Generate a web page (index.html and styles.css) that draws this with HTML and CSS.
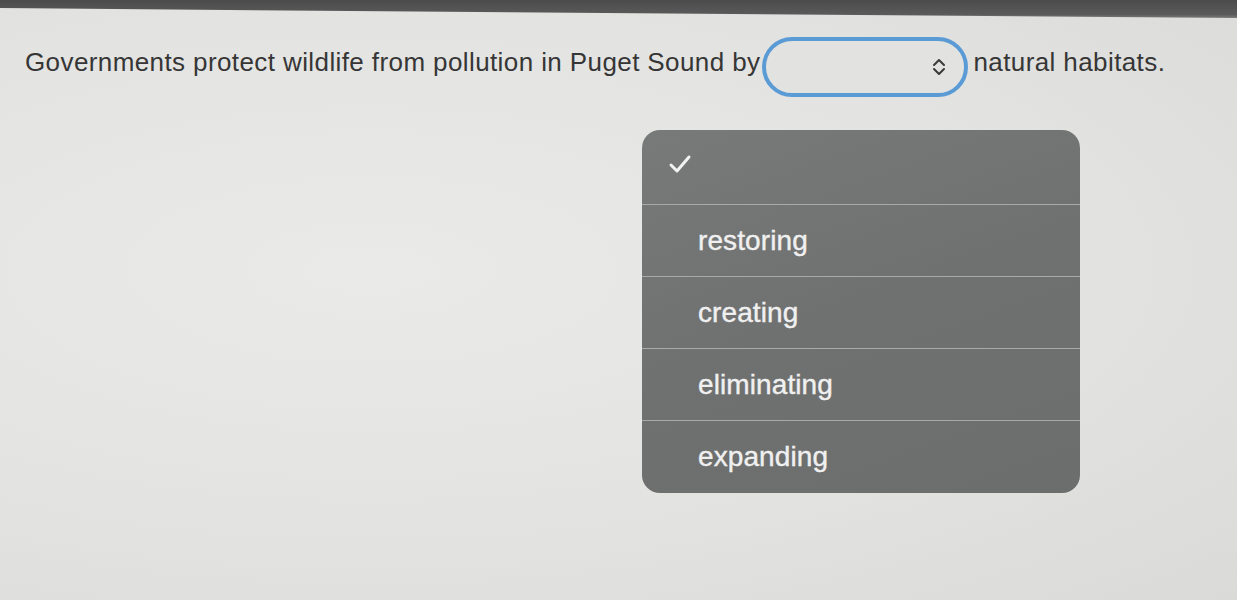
FILE: index.html
```html
<!DOCTYPE html>
<html lang="en">
<head>
<meta charset="utf-8">
<title>Puget Sound question</title>
<link rel="stylesheet" href="styles.css">
</head>
<body>
<div class="topbar"></div>
<main class="page">
  <div class="sentence">
    <span class="text">Governments protect wildlife from pollution in Puget Sound by</span>
    <span class="select">
      <svg class="chev" width="16" height="20" viewBox="0 0 16 20" aria-hidden="true">
        <path d="M3 8 L8 3 L13 8" fill="none" stroke="#3a3a3a" stroke-width="2" stroke-linecap="round" stroke-linejoin="round"/>
        <path d="M3 12 L8 17 L13 12" fill="none" stroke="#3a3a3a" stroke-width="2" stroke-linecap="round" stroke-linejoin="round"/>
      </svg>
    </span>
    <span class="text">natural habitats.</span>
  </div>
  <div class="menu">
    <div class="item check">
      <svg width="24" height="20" viewBox="0 0 24 20" aria-hidden="true">
        <path d="M3 11 L9 17 L21 3" fill="none" stroke="#f2f2f2" stroke-width="3" stroke-linecap="round" stroke-linejoin="round"/>
      </svg>
    </div>
    <div class="item">restoring</div>
    <div class="item">creating</div>
    <div class="item">eliminating</div>
    <div class="item last">expanding</div>
  </div>
</main>
</body>
</html>
```

FILE: styles.css
```css
html, body {
  margin: 0;
  padding: 0;
}
body {
  width: 1237px;
  height: 600px;
  overflow: hidden;
  background: radial-gradient(ellipse at 30% 45%, #eaeae8 0%, #e3e3e1 55%, #dadad8 100%);
  font-family: "Liberation Sans", Arial, sans-serif;
  color: #363636;
}
.topbar {
  height: 18px;
  margin-bottom: -3px;
  background: linear-gradient(180deg, #4b4b4b 0%, #5a5a5a 80%, #7a7a7a 100%);
  clip-path: polygon(0 0, 100% 0, 100% 100%, 0 45%);
}
.page {
  position: relative;
  padding: 22px 0 0 25px;
}
.sentence {
  display: flex;
  align-items: flex-start;
  font-size: 26px;
  letter-spacing: 0.4px;
}
.text {
  padding-top: 10px;
  line-height: 30px;
}
.select {
  box-sizing: border-box;
  width: 206px;
  height: 60px;
  margin: 0 5px 0 2px;
  border: 4px solid #5a9bd6;
  border-radius: 30px;
  background: #e2e2e0;
  display: flex;
  align-items: center;
  justify-content: flex-end;
  padding-right: 17px;
}
.chev {
  display: block;
}
.menu {
  position: absolute;
  left: 642px;
  top: 115px;
  width: 438px;
  background: linear-gradient(160deg, #787979 0%, #6f7070 50%, #6c6d6d 100%);
  border-radius: 18px;
  overflow: hidden;
}
.item {
  box-sizing: border-box;
  height: 72px;
  display: flex;
  align-items: center;
  padding-left: 56px;
  font-size: 28px;
  letter-spacing: 0.1px;
  color: #f0f0f0;
  -webkit-text-stroke: 0.4px #f0f0f0;
  border-bottom: 1.5px solid #a9a9a9;
}
.item.check {
  height: 75px;
  padding-left: 26px;
  align-items: flex-start;
  padding-top: 24px;
}
.item.last {
  border-bottom: none;
}
```
